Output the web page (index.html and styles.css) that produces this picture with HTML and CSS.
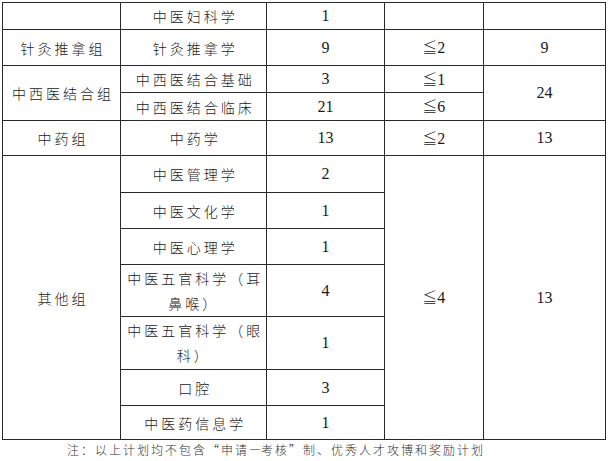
FILE: index.html
```html
<!DOCTYPE html>
<html lang="zh">
<head>
<meta charset="utf-8">
<link rel="stylesheet" href="styles.css">
</head>
<body>
<div class="page">
<table class="plan">
<colgroup>
<col class="c1"><col class="c2"><col class="c3"><col class="c4"><col class="c5">
</colgroup>
<tbody>
<tr class="r27"><td></td><td class="zh">中医妇科学</td><td class="num">1</td><td></td><td></td></tr>
<tr class="r36"><td class="zh">针灸推拿组</td><td class="zh">针灸推拿学</td><td class="num">9</td><td class="num"><span class="le">≦</span>2</td><td class="num">9</td></tr>
<tr class="r27"><td class="zh" rowspan="2">中西医结合组</td><td class="zh">中西医结合基础</td><td class="num">3</td><td class="num"><span class="le">≦</span>1</td><td class="num" rowspan="2">24</td></tr>
<tr class="r28"><td class="zh">中西医结合临床</td><td class="num">21</td><td class="num"><span class="le">≦</span>6</td></tr>
<tr class="r35"><td class="zh">中药组</td><td class="zh">中药学</td><td class="num">13</td><td class="num"><span class="le">≦</span>2</td><td class="num">13</td></tr>
<tr class="r37"><td class="zh" rowspan="7">其他组</td><td class="zh">中医管理学</td><td class="num">2</td><td class="num" rowspan="7"><span class="le">≦</span>4</td><td class="num" rowspan="7">13</td></tr>
<tr class="r36"><td class="zh">中医文化学</td><td class="num">1</td></tr>
<tr class="r36"><td class="zh">中医心理学</td><td class="num">1</td></tr>
<tr class="r52"><td class="zh wrap">中医五官科学（耳鼻喉）</td><td class="num">4</td></tr>
<tr class="r53"><td class="zh wrap">中医五官科学（眼科）</td><td class="num">1</td></tr>
<tr class="r36"><td class="zh">口腔</td><td class="num">3</td></tr>
<tr class="r34"><td class="zh">中医药信息学</td><td class="num">1</td></tr>
</tbody>
</table>
<p class="note">注：以上计划均不包含“申请<span class="dash">—</span>考核”制、优秀人才攻博和奖励计划</p>
</div>
</body>
</html>
```
FILE: styles.css
```css
html, body {
  margin: 0;
  padding: 0;
  background: #fff;
}
.page {
  padding: 2px 0 0 2px;
}
.plan {
  border-collapse: collapse;
  table-layout: fixed;
  width: 604px;
  color: #1a1a1a;
}
.c1 { width: 118px; }
.c2 { width: 146px; }
.c3 { width: 117px; }
.c4 { width: 99px; }
.c5 { width: 122px; }
.plan td {
  border: 1px solid #2a2a2a;
  padding: 0 3px;
  text-align: center;
  vertical-align: middle;
}
.zh {
  font-family: "Noto Sans CJK SC", "Noto Sans", sans-serif;
  font-size: 14px;
  font-weight: 300;
  letter-spacing: 3px;
  line-height: 24px;
  text-indent: 3px;
}
.wrap {
  line-height: 25px;
}
.num {
  font-family: "Liberation Serif", serif;
  font-size: 16px;
  line-height: 20px;
}
.le {
  font-family: "Noto Sans CJK SC", sans-serif;
  font-size: 15px;
  font-weight: 300;
}
.r27 { height: 27px; }
.r28 { height: 28px; }
.r34 { height: 34px; }
.r35 { height: 35px; }
.r36 { height: 36px; }
.r37 { height: 37px; }
.r52 { height: 52px; }
.r53 { height: 53px; }
.note {
  margin: 2px 0 0 0;
  padding-left: 65px;
  font-family: "Noto Sans CJK SC", sans-serif;
  font-size: 12px;
  font-weight: 300;
  letter-spacing: 2px;
  line-height: 16px;
  color: #333;
}
.dash {
  font-weight: 700;
  letter-spacing: 0;
}
```
